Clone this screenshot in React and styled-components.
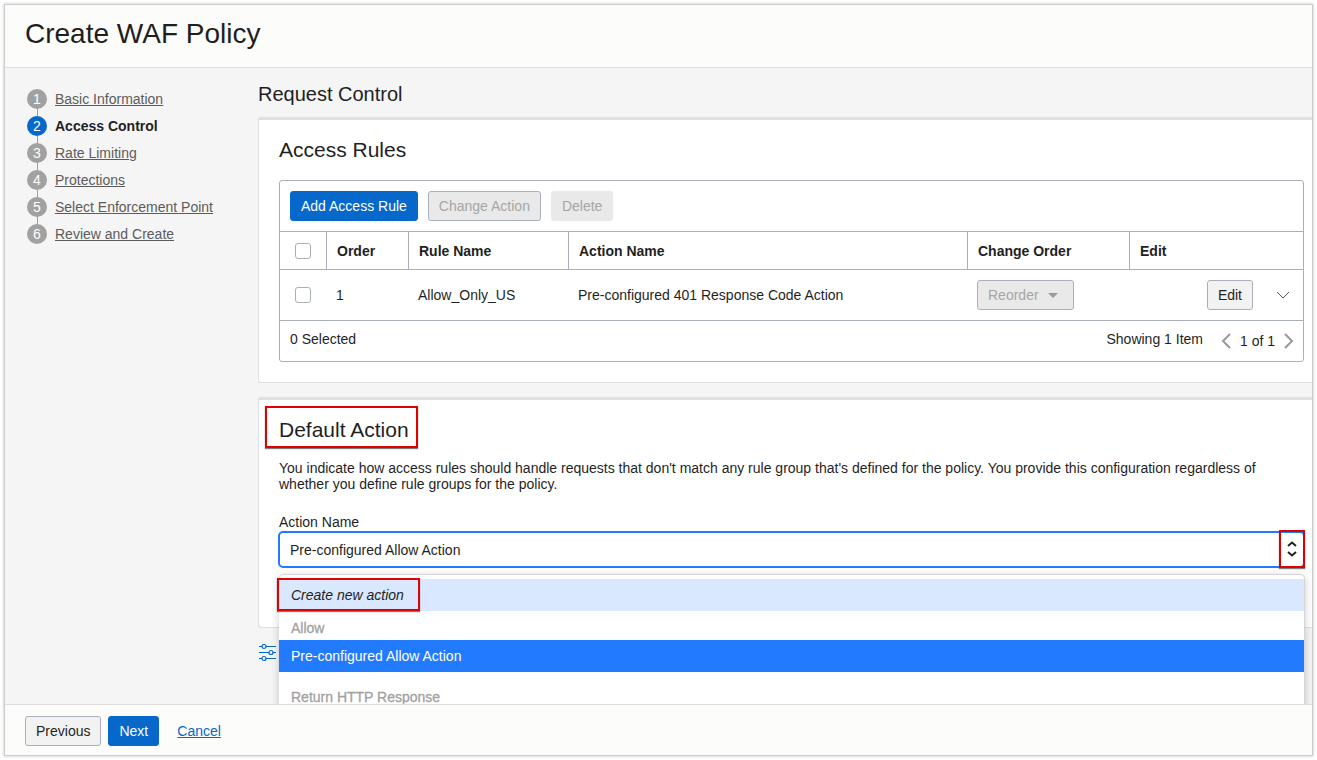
import React from 'react';
import styled, { createGlobalStyle } from 'styled-components';

const steps = [
    'Basic Information',
    'Access Control',
    'Rate Limiting',
    'Protections',
    'Select Enforcement Point',
    'Review and Create',
];

const App = () => {
    return (
        <Frame>
            <GlobalStyle />
            <Header>
                <h1>Create WAF Policy</h1>
            </Header>
            <Body>
                <Steps>
                    {steps.map((step, i) => (
                        <Step key={step}>
                            <StepNumber $active={i === 1}>{i + 1}</StepNumber>
                            {i === 1 ? <b>{step}</b> : <a href={'#step'}>{step}</a>}
                        </Step>
                    ))}
                </Steps>
                <Content>
                    <PageTitle>Request Control</PageTitle>
                    <AccessRules />
                    <DefaultAction />
                    <Advanced href={'#advanced'} aria-label={'Advanced options'}>
                        <SlidersIcon />
                    </Advanced>
                </Content>
            </Body>
            <Footer>
                <Button>Previous</Button>
                <Button $primary>Next</Button>
                <a href={'#cancel'}>Cancel</a>
            </Footer>
        </Frame>
    );
};

export default App;

const AccessRules = () => (
    <Card>
        <CardTitle>Access Rules</CardTitle>
        <TableBox>
            <Toolbar>
                <Button $primary>Add Access Rule</Button>
                <Button disabled>Change Action</Button>
                <Button disabled $plain>Delete</Button>
            </Toolbar>
            <Table>
                <colgroup>
                    <col width={'46'} />
                    <col width={'82'} />
                    <col width={'160'} />
                    <col />
                    <col width={'162'} />
                    <col width={'174'} />
                </colgroup>
                <thead>
                    <tr>
                        <th><Check type={'checkbox'} aria-label={'Select all'} /></th>
                        <th>Order</th>
                        <th>Rule Name</th>
                        <th>Action Name</th>
                        <th>Change Order</th>
                        <th>Edit</th>
                    </tr>
                </thead>
                <tbody>
                    <tr>
                        <td><Check type={'checkbox'} aria-label={'Select rule 1'} /></td>
                        <td>1</td>
                        <td>Allow_Only_US</td>
                        <td>Pre-configured 401 Response Code Action</td>
                        <td>
                            <Button disabled>
                                Reorder
                                <svg width="10" height="5" viewBox="0 0 10 5"><path d="M0 0h10L5 5z" fill="#9a9a9a" /></svg>
                            </Button>
                        </td>
                        <td>
                            <RowActions>
                                <Button>Edit</Button>
                                <IconButton aria-label={'Expand row'}>
                                    <svg width="14" height="8" viewBox="0 0 14 8"><path d="M1 1l6 6 6-6" fill="none" stroke="#555" /></svg>
                                </IconButton>
                            </RowActions>
                        </td>
                    </tr>
                </tbody>
            </Table>
            <TableFooter>
                <span>0 Selected</span>
                <span>Showing 1 Item</span>
                <Pager>
                    <IconButton aria-label={'Previous page'}>
                        <svg width="10" height="16" viewBox="0 0 10 16"><path d="M9 1L2 8l7 7" fill="none" stroke="#999" strokeWidth="2" /></svg>
                    </IconButton>
                    1 of 1
                    <IconButton aria-label={'Next page'}>
                        <svg width="10" height="16" viewBox="0 0 10 16"><path d="M1 1l7 7-7 7" fill="none" stroke="#999" strokeWidth="2" /></svg>
                    </IconButton>
                </Pager>
            </TableFooter>
        </TableBox>
    </Card>
);

const DefaultAction = () => (
    <Card>
        <CardTitle><TitleMark>Default Action</TitleMark></CardTitle>
        <p>
            You indicate how access rules should handle requests that don't match any rule group that's defined for the policy. You provide this configuration regardless of whether you define rule groups for the policy.
        </p>
        <label htmlFor={'action'}>Action Name</label>
        <SelectBox>
            <Select id={'action'} defaultValue={'allow'}>
                <option value={'allow'}>Pre-configured Allow Action</option>
            </Select>
            <SelectMark>
                <svg width="10" height="16" viewBox="0 0 10 16">
                    <path d="M1 5l4-3.5L9 5M1 11l4 3.5L9 11" fill="none" stroke="#222" strokeWidth="2" />
                </svg>
            </SelectMark>
            <Menu role={'listbox'} aria-label={'Action Name'}>
                <Option role={'option'} $create><span>Create new action</span></Option>
                <Group>Allow</Group>
                <Option role={'option'} aria-selected $selected>Pre-configured Allow Action</Option>
                <Group $spaced>Return HTTP Response</Group>
            </Menu>
        </SelectBox>
    </Card>
);

const SlidersIcon = () => (
    <svg width="17" height="18" viewBox="0 0 17 18" fill="none" stroke="#0568ca" strokeWidth="1.2">
        <path d="M0 2.5h3M7 2.5h10M0 8.5h10M14 8.5h3M0 14.5h3M7 14.5h10" />
        <circle cx="5" cy="2.5" r="2" />
        <circle cx="12" cy="8.5" r="2" />
        <circle cx="5" cy="14.5" r="2" />
    </svg>
);

const GlobalStyle = createGlobalStyle`
*, *::after {
    box-sizing: border-box;
}
body {
    margin: 0;
    padding: 4px;
    background: #fff;
    color: #1f1f1f;
    font: 14px/16px 'Liberation Sans', Arial, sans-serif;
}
button, select {
    font: inherit;
    color: inherit;
}
a {
    color: #0568ca;
}
h1, h2, h3, p {
    margin: 0;
    font-weight: normal;
}
`;

const Frame = styled.div`
display: flex;
flex-direction: column;
height: calc(100vh - 8px);
border: 1px solid #ccc;
box-shadow: 0 0 3px rgba(0, 0, 0, 0.25);
overflow: hidden;
`;

const Header = styled.header`
padding: 12px 20px 17px;
background: #fcfcfa;
border-bottom: 1px solid #dedede;
h1{
    font-size: 28px;
    line-height: 33px;
}
`;

const Body = styled.div`
display: flex;
flex: 1;
min-height: 0;
overflow: hidden;
background: #f5f5f5;
`;

const Steps = styled.ol`
flex: none;
width: 253px;
margin: 0;
padding: 21px 22px;
list-style: none;
`;

const Step = styled.li`
position: relative;
display: flex;
align-items: center;
gap: 8px;
height: 20px;
margin-bottom: 7px;
a{
    color: #5c5c5c;
}
/* line down to the next number */
&:not(:last-child)::after{
    content: '';
    position: absolute;
    left: 10px;
    top: 20px;
    width: 1px;
    height: 7px;
    background: #9e9e9e;
}
`;

const StepNumber = styled.span`
width: 20px;
height: 20px;
border-radius: 50%;
line-height: 20px;
text-align: center;
color: #fff;
background: ${({ $active }) => ($active ? '#0568ca' : '#a1a1a1')};
`;

const Content = styled.main`
flex: 1;
min-width: 0;
`;

const PageTitle = styled.h2`
padding: 14px 0 11px;
font-size: 20px;
line-height: 24px;
`;

const Card = styled.section`
min-height: 231px;
margin-bottom: 14px;
padding: 18px 8px 20px 20px;
background: #fff;
border: solid #dddfe3;
border-width: 3px 0 1px 1px;
border-radius: 3px 0 0 3px;
p{
    padding: 18px 20px 22px 0;
}
label{
    display: block;
    margin-bottom: 1px;
}
`;

const CardTitle = styled.h3`
font-size: 21px;
line-height: 24px;
`;

const TableBox = styled.div`
margin-top: 18px;
border: 1px solid #aab0b9;
border-radius: 3px;
`;

const Toolbar = styled.div`
display: flex;
gap: 10px;
padding: 10px;
`;

const Button = styled.button`
height: 30px;
padding: 0 10px;
border: 1px solid #aab0b9;
border-radius: 3px;
background: #f2f2f2;
white-space: nowrap;
${({ $primary }) => $primary && 'background: #0568ca; border-color: #0568ca; color: #fff;'}
&:disabled{
    color: #a6a6a6;
    background: #e9e9e9;
    ${({ $plain }) => $plain && 'border-color: #e9e9e9;'}
}
svg{
    margin: 0 5px 2px 9px;
}
`;

const Table = styled.table`
width: 100%;
table-layout: fixed;
border-collapse: separate;
border-spacing: 0;
th, td{
    padding: 0 10px;
    text-align: left;
    border-top: 1px solid #aab0b9;
}
th{
    height: 38px;
}
th + th{
    border-left: 1px solid #aab0b9;
}
td{
    height: 51px;
}
th:first-child, td:first-child{
    padding: 0 15px;
}
`;

const Check = styled.input`
display: block;
appearance: none;
width: 16px;
height: 16px;
margin: 0;
border: 1px solid #aab0b9;
border-radius: 3px;
background: #fff;
`;

const RowActions = styled.div`
display: flex;
align-items: center;
justify-content: flex-end;
gap: 23px;
padding-right: 3px;
`;

const IconButton = styled.button`
display: flex;
padding: 0;
border: 0;
background: none;
`;

const TableFooter = styled.div`
display: flex;
align-items: flex-start;
min-height: 41px;
padding: 10px 9px 0 10px;
border-top: 1px solid #aab0b9;
span:first-child{
    flex: 1;
}
`;

const Pager = styled.div`
display: flex;
align-items: center;
gap: 9px;
margin-left: 18px;
line-height: 20px;
`;

const TitleMark = styled.span`
position: relative;
&::after{
    content: '';
    position: absolute;
    inset: -12px -9px -7px -14px;
    border: 2px solid #e00000;
    box-shadow: 0 1px 1px rgba(0, 0, 0, 0.5);
}
`;

const SelectBox = styled.div`
position: relative;
margin: 0 -1px;
`;

const Select = styled.select`
appearance: none;
display: block;
width: 100%;
height: 37px;
padding: 0 10px;
border: 2px solid #227aff;
border-radius: 5px;
background: #fff;
outline: none;
`;

const SelectMark = styled.span`
position: absolute;
top: -1px;
right: 0;
display: flex;
align-items: center;
justify-content: center;
width: 26px;
height: 38px;
border: 2px solid #e00000;
box-shadow: 0 1px 1px rgba(0, 0, 0, 0.5);
pointer-events: none;
`;

const Menu = styled.ul`
position: absolute;
top: 43px;
left: 1px;
right: 0;
z-index: 1;
height: 220px;
margin: 0;
padding: 4px 0;
list-style: none;
background: #fff;
border: 1px solid #d5d5d5;
border-width: 1px 1px 1px 0;
border-radius: 5px;
box-shadow: 0 2px 8px rgba(0, 0, 0, 0.2);
`;

const Option = styled.li`
position: relative;
height: 32px;
padding: 0 12px;
line-height: 32px;
${({ $selected }) => $selected && 'background: #227aff; color: #fff;'}
${({ $create }) => $create && 'background: #d9e7ff; font-style: italic;'}
span::after{
    content: '';
    position: absolute;
    top: -1px;
    left: -2px;
    width: 143px;
    height: 33px;
    border: 2px solid #e00000;
    box-shadow: 0 1px 1px rgba(0, 0, 0, 0.5);
}
`;

const Group = styled.li`
padding: ${({ $spaced }) => ($spaced ? '17px 12px 7px' : '9px 12px 4px')};
color: #a1a1a1;
-webkit-text-stroke: 0.3px #a1a1a1;
`;

const Advanced = styled.a`
display: inline-flex;
margin: 2px 1px;
`;

const Footer = styled.footer`
display: flex;
align-items: center;
padding: 11px 20px 9px;
background: #fcfcfa;
border-top: 1px solid #dedede;
${Button} + ${Button}{
    margin-left: 7px;
}
a{
    margin-left: 18px;
}
`;
